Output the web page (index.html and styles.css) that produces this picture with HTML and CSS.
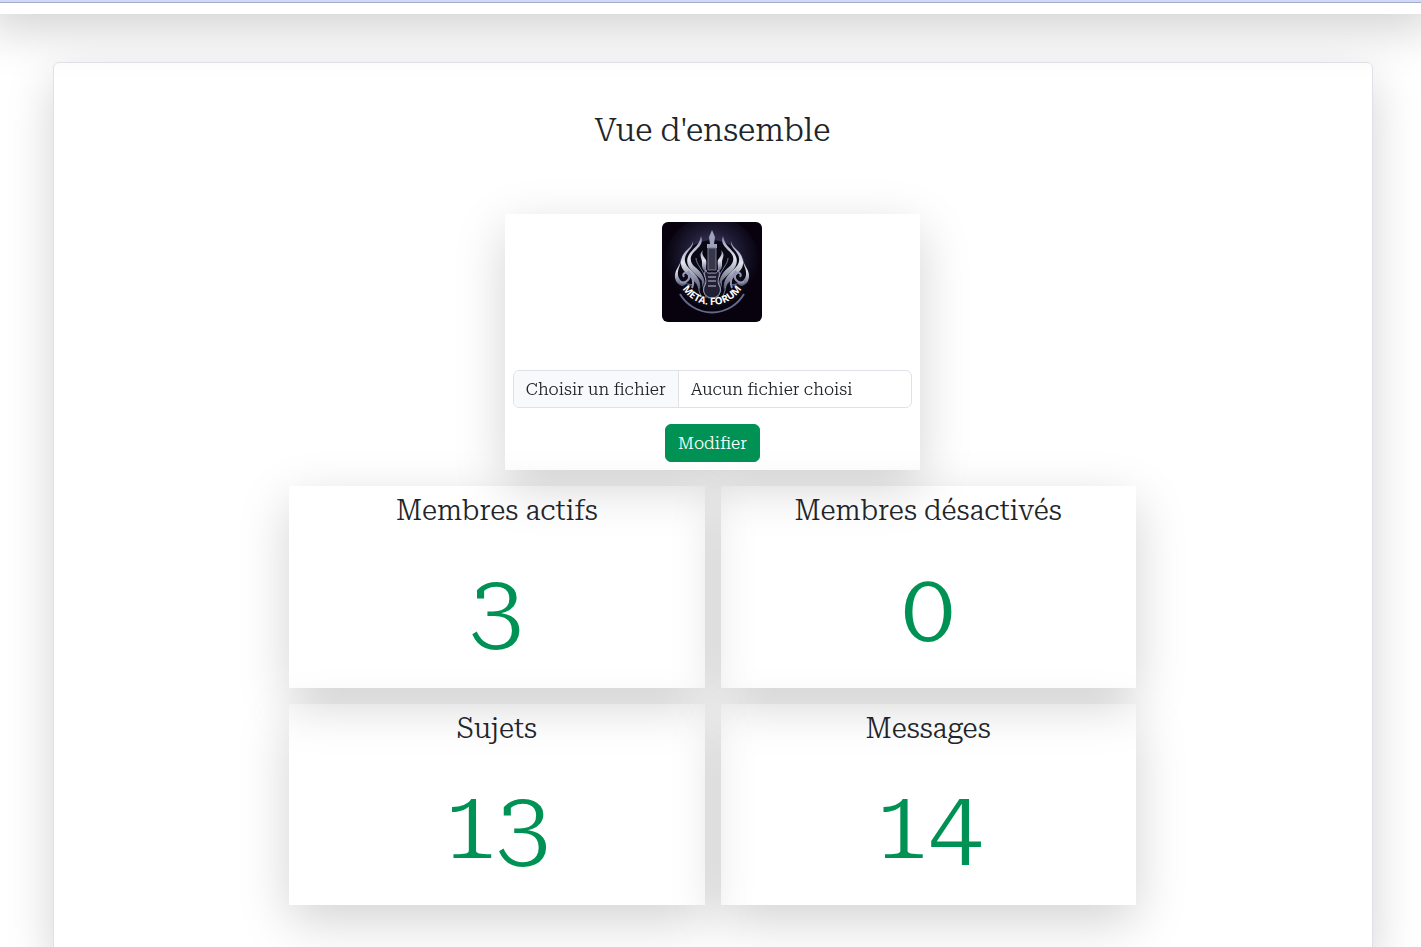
FILE: index.html
```html
<!DOCTYPE html>
<html lang="fr">
<head>
    <meta charset="UTF-8">
    <meta name="viewport" content="width=device-width, initial-scale=1.0">
    <title>Metal Forum - Administration</title>
    <link rel="stylesheet" href="styles.css">
</head>
<body>
    <header class="topbar"></header>

    <main class="page">
        <section class="panel">
            <h1>Vue d'ensemble</h1>

            <div class="cards">
                <form class="card logo-card">
                    <svg class="logo" viewBox="0 0 100 100" role="img" aria-label="Metal Forum">
                        <defs>
                            <radialGradient id="glow" cx="50%" cy="42%" r="50%">
                                <stop offset="0" stop-color="#4a4672"/>
                                <stop offset="0.6" stop-color="#1c1830"/>
                                <stop offset="1" stop-color="#07020d"/>
                            </radialGradient>
                            <linearGradient id="steel" x1="0" y1="0" x2="0" y2="1">
                                <stop offset="0" stop-color="#8f93b0"/>
                                <stop offset="0.45" stop-color="#e2e4ef"/>
                                <stop offset="1" stop-color="#4a4e6a"/>
                            </linearGradient>
                            <path id="arc" d="M15 48A35 35 0 0 0 85 48"/>
                            <!-- left half of the flames, mirrored for the right -->
                            <g id="flames">
                                <path fill="url(#steel)" d="M39 14C42 22 36 26 32 30C27 35 28 41 33 45C38 49 43 54 43 65C40 57 35 54 31 50C25 45 23 38 28 31C32 26 38 22 39 14Z"/>
                                <path fill="url(#steel)" d="M31 19C32 26 24 29 23 36C22 43 27 46 32 51C37 56 39 61 38 68C34 59 28 56 23 50C17 44 18 36 23 30C27 26 30 24 31 19Z"/>
                                <path fill="url(#steel)" d="M41 28C39 32 42 35 44 38C45 42 43 46 45 51C39 47 40 43 40 40C40 36 36 33 41 28Z"/>
                                <path fill="url(#steel)" d="M19 36C20 43 15 46 16 53C17 60 24 62 31 62C27 66 18 66 14 59C11 52 15 47 17 43C18 41 19 39 19 36Z"/>
                                <path fill="none" stroke="#9296b2" stroke-width="2" d="M18 60C25 62 29 56 26 52C23 49 20 52 22 55M30 66C33 60 31 55 26 49"/>
                                <path fill="none" stroke="#777b9a" stroke-width="1" d="M34 36C34 42 41 48 43 55M34 58C37 63 36 70 40 75M41 57C39 64 44 69 44 76M46 55C43 62 48 70 47 77"/>
                            </g>
                        </defs>
                        <rect width="100" height="100" fill="#07020d"/>
                        <circle cx="50" cy="42" r="48" fill="url(#glow)"/>
                        <circle cx="50" cy="52" r="34" fill="#0b0816"/>
                        <use href="#flames"/>
                        <use href="#flames" transform="matrix(-1 0 0 1 100 0)"/>
                        <path d="M50 8L53 15L52 22H55V26H45V22H48L47 15Z" fill="#9da1ba"/>
                        <path d="M46 26H54V48H46Z" fill="#38374a" stroke="#77798f"/>
                        <path d="M44 48C45 52 47 51 50 51S55 52 56 48C60 53 54 57 57 63C61 70 56 76 50 76S39 70 43 63C46 57 40 53 44 48Z" fill="#211f33" stroke="#a2a6bd"/>
                        <path d="M46 55H54M46 59H54M46 64H54" stroke="#bfc2d3"/>
                        <path d="M21 64A33 33 0 0 0 79 64" fill="none" stroke="#0b0816" stroke-width="9"/>
                        <path d="M18 72A37 37 0 0 0 82 72" fill="none" stroke="#63678a" stroke-width="2"/>
                        <text class="logo-text"><textPath href="#arc" startOffset="50%">META. FORUM</textPath></text>
                    </svg>

                    <div class="file-field">
                        <input type="file" id="logoFile" class="file-input" accept="image/*">
                        <label for="logoFile" class="file-label">
                            <span class="file-button">Choisir un fichier</span>
                            <span class="file-name">Aucun fichier choisi</span>
                        </label>
                    </div>

                    <button type="submit" class="btn">Modifier</button>
                </form>

                <div class="card">
                    <h2>Membres actifs</h2>
                    <p class="count">3</p>
                </div>
                <div class="card">
                    <h2>Membres désactivés</h2>
                    <p class="count">0</p>
                </div>
                <div class="card">
                    <h2>Sujets</h2>
                    <p class="count">13</p>
                </div>
                <div class="card">
                    <h2>Messages</h2>
                    <p class="count">14</p>
                </div>
            </div>
        </section>
    </main>
</body>
</html>
```

FILE: styles.css
```css
* {
    margin: 0;
    padding: 0;
    box-sizing: border-box;
}

body {
    font-family: "Roboto Serif", "DejaVu Serif", serif;
    font-weight: 300;
    font-size: 17px;
    font-optical-sizing: none;
    line-height: 24px;
    color: #212529;
    background: white;
    overflow-x: hidden;
}

.topbar {
    position: relative;
    height: 14px;
    border-top: 2px solid #d0daf8;
}

.topbar::before {
    content: "";
    display: block;
    border-top: 1px solid #a3adcb;
}

/* shadow of the bar, cast from above the window */
.topbar::after {
    content: "";
    position: absolute;
    inset: -100px -12px 0;
    z-index: -1;
    box-shadow: 0 16px 48px rgba(0, 0, 0, 0.175);
}

.page {
    padding: 48px 0 48px 4px;
    overflow: hidden;
}

.panel {
    max-width: 1320px;
    margin: 0 auto;
    padding: 48px 24px;
    border: 1px solid #dee2e6;
    border-radius: 6px;
    box-shadow: 0 16px 48px rgba(0, 0, 0, 0.175);
    text-align: center;
}

h1 {
    font-size: 32px;
    font-weight: 300;
    font-optical-sizing: auto;
    line-height: 38px;
    margin-bottom: 65px;
}

.cards {
    display: grid;
    grid-template-columns: 1fr 1fr;
    gap: 16px;
    width: 66.6667%;
    margin: 0 auto;
}

.card {
    padding: 8px;
    box-shadow: 0 16px 48px rgba(0, 0, 0, 0.175);
}

.logo-card {
    grid-column: 1 / -1;
    justify-self: center;
    width: calc(50% - 8px);
}

.logo {
    display: block;
    width: 100px;
    height: 100px;
    margin: 0 auto 48px;
    border-radius: 6px;
}

.logo-text {
    font-family: "Open Sans", sans-serif;
    font-size: 10px;
    font-weight: 700;
    fill: white;
    text-anchor: middle;
}

.file-field {
    position: relative;
    margin-bottom: 16px;
}

.file-input {
    position: absolute;
    inset: 0;
    width: 100%;
    opacity: 0;
}

.file-label {
    position: relative;
    display: flex;
    border: 1px solid #dee2e6;
    border-radius: 6px;
    overflow: hidden;
    cursor: pointer;
}

.file-button {
    padding: 6px 12px;
    background: #f8f9fa;
    border-right: 1px solid #dee2e6;
}

.file-name {
    padding: 6px 12px;
}

.file-input:focus + .file-label {
    border-color: #009254;
}

.btn {
    padding: 6px 12px;
    border: 1px solid #009254;
    border-radius: 6px;
    background: #009254;
    color: white;
    font: inherit;
    cursor: pointer;
    vertical-align: top;
}

.btn:hover {
    background: #007a46;
}

h2 {
    font-size: 28px;
    font-weight: 300;
    font-optical-sizing: auto;
    line-height: 1.2;
    margin-bottom: 8px;
}

.count {
    font-size: 96px;
    font-optical-sizing: auto;
    line-height: 1.5;
    color: #009254;
}
```
